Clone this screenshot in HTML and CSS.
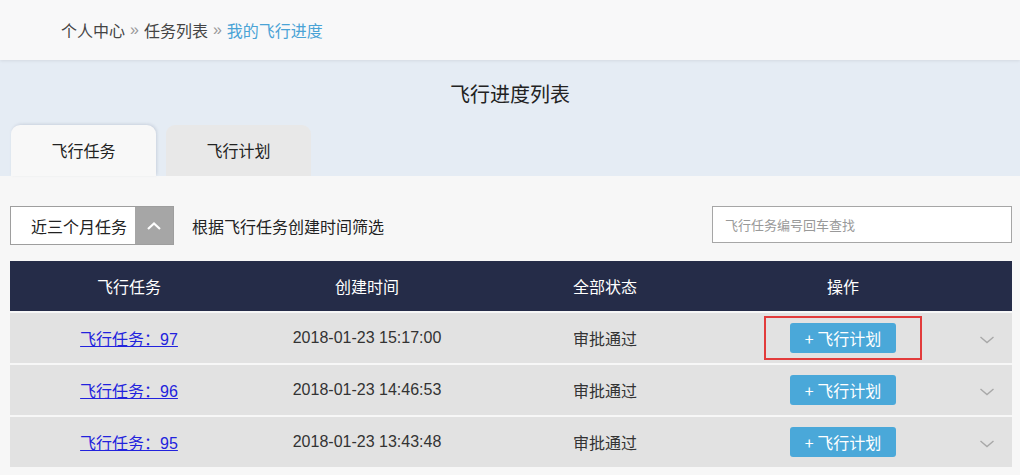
FILE: index.html
```html
<!DOCTYPE html>
<html lang="zh-CN">
<head>
<meta charset="utf-8">
<title>飞行进度列表</title>
<link rel="stylesheet" href="styles.css">
</head>
<body>
<header class="topbar">
  <nav class="crumbs">
    <span class="crumb">个人中心</span>
    <span class="sep">»</span>
    <span class="crumb">任务列表</span>
    <span class="sep">»</span>
    <span class="crumb current">我的飞行进度</span>
  </nav>
</header>
<section class="band">
  <h1 class="title">飞行进度列表</h1>
  <div class="tabs">
    <div class="tab active">飞行任务</div>
    <div class="tab">飞行计划</div>
  </div>
</section>
<main class="content">
  <div class="filters">
    <div class="select">
      <span class="select-text">近三个月任务</span>
      <span class="select-btn">
        <svg width="16" height="10" viewBox="0 0 16 10"><path d="M2 8 L8 2.5 L14 8" fill="none" stroke="#fff" stroke-width="2.2"/></svg>
      </span>
    </div>
    <span class="filter-label">根据飞行任务创建时间筛选</span>
    <div class="search">飞行任务编号回车查找</div>
  </div>
  <div class="table">
    <div class="row head">
      <div class="cell">飞行任务</div>
      <div class="cell">创建时间</div>
      <div class="cell">全部状态</div>
      <div class="cell">操作</div>
      <div class="cell narrow"></div>
    </div>
    <div class="row">
      <div class="cell"><a class="link" href="#">飞行任务：97</a></div>
      <div class="cell num">2018-01-23 15:17:00</div>
      <div class="cell">审批通过</div>
      <div class="cell"><span class="highlight"><span class="btn">+ 飞行计划</span></span></div>
      <div class="cell narrow"><svg width="16" height="10" viewBox="0 0 16 10"><path d="M1.5 2 L8 7.5 L14.5 2" fill="none" stroke="#a8a8a8" stroke-width="1.4"/></svg></div>
    </div>
    <div class="row">
      <div class="cell"><a class="link" href="#">飞行任务：96</a></div>
      <div class="cell num">2018-01-23 14:46:53</div>
      <div class="cell">审批通过</div>
      <div class="cell"><span class="btn">+ 飞行计划</span></div>
      <div class="cell narrow"><svg width="16" height="10" viewBox="0 0 16 10"><path d="M1.5 2 L8 7.5 L14.5 2" fill="none" stroke="#a8a8a8" stroke-width="1.4"/></svg></div>
    </div>
    <div class="row">
      <div class="cell"><a class="link" href="#">飞行任务：95</a></div>
      <div class="cell num">2018-01-23 13:43:48</div>
      <div class="cell">审批通过</div>
      <div class="cell"><span class="btn">+ 飞行计划</span></div>
      <div class="cell narrow"><svg width="16" height="10" viewBox="0 0 16 10"><path d="M1.5 2 L8 7.5 L14.5 2" fill="none" stroke="#a8a8a8" stroke-width="1.4"/></svg></div>
    </div>
  </div>
</main>
</body>
</html>
```

FILE: styles.css
```css
* { box-sizing: border-box; }
html, body { margin: 0; padding: 0; }
body {
  width: 1020px;
  height: 475px;
  overflow: hidden;
  background: #f7f7f7;
  font-family: "Liberation Sans", "Noto Sans CJK SC", sans-serif;
  color: #333;
}
.topbar {
  height: 60px;
  background: #f8f8f9;
  display: flex;
  align-items: center;
  padding-left: 61px;
  box-shadow: 0 1px 3px rgba(0,0,0,0.08);
  position: relative;
  z-index: 1;
}
.crumbs {
  display: flex;
  align-items: center;
  gap: 5px;
  font-size: 16px;
  font-family: "Noto Sans CJK SC", sans-serif;
  color: #444;
}
.sep { color: #999; font-family: "Liberation Sans", sans-serif; }
.current { color: #4aa3d6; }
.band {
  height: 116px;
  background: #e5ecf4;
  display: flex;
  flex-direction: column;
  justify-content: space-between;
}
.title {
  margin: 0;
  padding-top: 20px;
  text-align: center;
  font-weight: normal;
  font-size: 20px;
  line-height: 28px;
  color: #222;
  font-family: "Noto Sans CJK SC", sans-serif;
}
.tabs {
  display: flex;
  gap: 10px;
  padding-left: 11px;
  height: 51px;
}
.tab {
  width: 145px;
  border-radius: 9px 9px 0 0;
  background: #e8e8e8;
  display: flex;
  justify-content: center;
  align-items: center;
  padding-bottom: 2px;
  font-size: 16px;
  color: #222;
  font-family: "Noto Sans CJK SC", sans-serif;
}
.tab.active {
  background: #f8f8f8;
  box-shadow: 1px -1px 3px rgba(100,110,140,0.2);
}
.content {
  padding: 30px 8px 0 10px;
}
.filters {
  display: flex;
  align-items: center;
  height: 39px;
}
.select {
  display: flex;
  width: 164px;
  height: 39px;
  border: 1px solid #9e9e9e;
  background: #fff;
}
.select-text {
  flex: 1;
  display: flex;
  align-items: center;
  padding-left: 20px;
  font-size: 16px;
  color: #222;
  font-family: "Noto Sans CJK SC", sans-serif;
}
.select-btn {
  width: 38px;
  background: #a6a6a6;
  display: flex;
  align-items: center;
  justify-content: center;
}
.filter-label {
  margin-left: 18px;
  font-size: 16px;
  color: #222;
  font-family: "Noto Sans CJK SC", sans-serif;
}
.search {
  margin-left: auto;
  width: 300px;
  height: 37px;
  margin-top: -2px;
  border: 1px solid #a6a6a6;
  background: #fff;
  display: flex;
  align-items: center;
  padding-left: 12px;
  font-size: 13px;
  color: #999;
  font-family: "Noto Sans CJK SC", sans-serif;
}
.table {
  margin-top: 16px;
  display: flex;
  flex-direction: column;
  gap: 2px;
}
.row {
  display: flex;
  height: 50px;
  background: #e2e2e2;
}
.row.head {
  background: #252c48;
  color: #fff;
}
.cell {
  width: 238px;
  display: flex;
  align-items: center;
  justify-content: center;
  font-size: 16px;
  font-family: "Noto Sans CJK SC", sans-serif;
}
.cell.narrow { width: 50px; padding-top: 4px; }
.cell.num { font-family: "Liberation Sans", sans-serif; font-size: 16px; color: #333; }
.link {
  color: #2222dd;
  text-decoration: underline;
  font-family: "Liberation Sans", "Noto Sans CJK SC", sans-serif;
  font-size: 16px;
}
.btn {
  display: inline-flex;
  align-items: center;
  justify-content: center;
  width: 106px;
  height: 30px;
  border-radius: 3px;
  background: #4aa8d9;
  color: #fff;
  font-size: 16px;
  font-family: "Noto Sans CJK SC", sans-serif;
}
.highlight {
  display: inline-flex;
  align-items: center;
  justify-content: center;
  width: 158px;
  height: 44px;
  border: 2px solid #e23b3b;
}
```
